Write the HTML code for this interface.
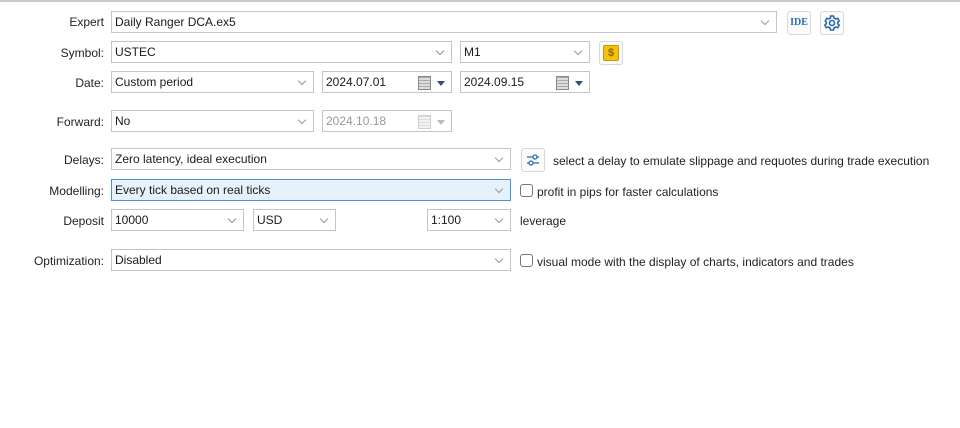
<!DOCTYPE html>
<html><head><style>
body{margin:0;width:960px;height:428px;background:#fff;font-family:"Liberation Sans",sans-serif;font-size:12px;color:#1a1a1a;position:relative;overflow:hidden}
.top{position:absolute;left:0;top:0;width:960px;height:2px;background:#c8c8c8}
.l{position:absolute;right:856px;text-align:right;white-space:nowrap;color:#222}
.b{position:absolute;box-sizing:border-box;border:1px solid #c4c4c4;background:#fff;height:22px;line-height:20px;padding-left:3px;white-space:nowrap}
.b.d::after{content:"";position:absolute;right:8px;top:6px;width:5px;height:5px;border-right:1px solid #999;border-bottom:1px solid #999;transform:rotate(45deg)}
.cal{position:absolute;right:20px;top:4px;width:11px;height:12px;border:1px solid #888;background:repeating-linear-gradient(0deg,#ddd 0 2px,#aaa 2px 3px)}
.cal+i{position:absolute;right:6px;top:9px;border-left:4px solid transparent;border-right:4px solid transparent;border-top:5px solid #3a4a7a}
.dis{color:#999}
.dis .cal{opacity:.4}.dis .cal+i{border-top-color:#bbb}
.btn{position:absolute;box-sizing:border-box;border:1px solid #d8d8d8;border-radius:3px;background:#fbfbfb;width:24px;height:24px}
.cb{position:absolute;width:13px;height:13px;border:1px solid #777;border-radius:3px;box-sizing:border-box;background:#fff}
.t{position:absolute;white-space:nowrap;color:#222}
</style></head><body>
<div class="top"></div>
<div class="l" style="top:15px">Expert</div>
<div class="b d" style="left:111px;top:11px;width:666px">Daily Ranger DCA.ex5</div>
<div class="btn" style="left:787px;top:11px;color:#2b6cb0;font:bold 10px 'Liberation Serif',serif;text-align:center;line-height:22px">IDE</div>
<div class="btn" style="left:820px;top:11px"><svg width="22" height="22" viewBox="0 0 22 22"><g fill="none" stroke="#2b6cb0" stroke-width="1.6"><circle cx="11" cy="11" r="2.5"/><path d="M9.5 4h3l.5 2 1.7 1 2-.7 1.5 2.6-1.5 1.4v1.4l1.5 1.4-1.5 2.6-2-.7-1.7 1-.5 2h-3l-.5-2-1.7-1-2 .7-1.5-2.6 1.5-1.4v-1.4L4.3 8.9l1.5-2.6 2 .7 1.7-1z"/></g></svg></div>

<div class="l" style="top:46px">Symbol:</div>
<div class="b d" style="left:111px;top:41px;width:341px">USTEC</div>
<div class="b d" style="left:460px;top:41px;width:130px">M1</div>
<div class="btn" style="left:599px;top:41px"><div style="position:absolute;left:3px;top:3px;width:16px;height:16px;box-sizing:border-box;background:#f4c20d;border:1px solid #c79a00;border-radius:2px;font:bold 11px 'Liberation Sans';color:#8a6a00;text-align:center;line-height:14px">$</div></div>

<div class="l" style="top:76px">Date:</div>
<div class="b d" style="left:111px;top:71px;width:203px">Custom period</div>
<div class="b" style="left:322px;top:71px;width:130px">2024.07.01<span class="cal"></span><i></i></div>
<div class="b" style="left:460px;top:71px;width:130px">2024.09.15<span class="cal"></span><i></i></div>

<div class="l" style="top:115px">Forward:</div>
<div class="b d" style="left:111px;top:110px;width:203px">No</div>
<div class="b dis" style="left:322px;top:110px;width:130px">2024.10.18<span class="cal"></span><i></i></div>

<div class="l" style="top:153px">Delays:</div>
<div class="b d" style="left:111px;top:148px;width:400px">Zero latency, ideal execution</div>
<div class="btn" style="left:521px;top:148px"><svg width="22" height="22" viewBox="0 0 22 22"><g stroke="#2b6cb0" stroke-width="1.3" fill="#fff"><path d="M5 8h12M5 14h12"/><circle cx="13" cy="8" r="2"/><circle cx="9" cy="14" r="2"/></g></svg></div>
<div class="t" style="left:553px;top:154px">select a delay to emulate slippage and requotes during trade execution</div>

<div class="l" style="top:184px">Modelling:</div>
<div class="b d" style="left:111px;top:179px;width:400px;background:#e5f1fb;border-color:#4a90d9">Every tick based on real ticks</div>
<div class="cb" style="left:520px;top:184px"></div>
<div class="t" style="left:537px;top:185px">profit in pips for faster calculations</div>

<div class="l" style="top:214px">Deposit</div>
<div class="b d" style="left:111px;top:209px;width:133px">10000</div>
<div class="b d" style="left:253px;top:209px;width:83px">USD</div>
<div class="b d" style="left:427px;top:209px;width:84px">1:100</div>
<div class="t" style="left:520px;top:214px">leverage</div>

<div class="l" style="top:254px">Optimization:</div>
<div class="b d" style="left:111px;top:249px;width:400px">Disabled</div>
<div class="cb" style="left:520px;top:254px"></div>
<div class="t" style="left:537px;top:255px">visual mode with the display of charts, indicators and trades</div>
</body></html>
